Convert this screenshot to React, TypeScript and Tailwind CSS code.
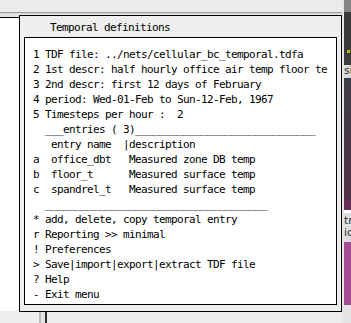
import React from "react";

const lines = [
  "1 TDF file: ../nets/cellular_bc_temporal.tdfa",
  "2 1st descr: half hourly office air temp floor te",
  "3 2nd descr: first 12 days of February",
  "4 period: Wed-01-Feb to Sun-12-Feb, 1967",
  "5 Timesteps per hour :  2",
  "  ___entries ( 3)______________________________",
  "   entry name  |description",
  "a  office_dbt   Measured zone DB temp",
  "b  floor_t      Measured surface temp",
  "c  spandrel_t   Measured surface temp",
  "  _____________________________________",
  "* add, delete, copy temporal entry",
  "r Reporting >> minimal",
  "! Preferences",
  "> Save|import|export|extract TDF file",
  "? Help",
  "- Exit menu",
];

const mono = {
  fontFamily: '"DejaVu Sans Mono", "Liberation Mono", monospace',
};

export default function App() {
  return (
    <div className="relative flex h-[323px] w-[351px] overflow-hidden bg-[#eeeeee]">
      {/* background window */}
      <div className="flex w-[342px] flex-col">
        <div className="h-[12px] bg-[#ebebeb]" />
        <div className="h-[1px] bg-[#9c9c9c]" />
        <div className="h-[1px] bg-[#d6d6d6]" />
        <div className="h-[3px] bg-[#e2e2e2]" />
        <div className="h-[1px] bg-black" />
        <div className="flex h-[293px]">
          <div className="w-[19px] bg-white" />
          <div className="flex-1 bg-[#eeeeee]" />
        </div>
        <div className="flex flex-1">
          <div className="w-[39px]" />
          <div className="w-[2px] bg-[#bdbdbd]" />
          <div className="w-[4px] bg-[#e4e4e4]" />
          <div className="w-[2px] bg-[#2a2a2a]" />
          <div className="flex-1" />
        </div>
      </div>
      <div className="w-[2px] bg-[#e6e6e6]" />
      {/* right strip: another window behind */}
      <div
        className="flex flex-1 flex-col overflow-hidden text-[11px] leading-[12px]"
        style={{ fontFamily: '"DejaVu Sans", sans-serif' }}
      >
        <div className="h-[12px] bg-[#858585]" />
        <div className="h-[38px] bg-[#3a3a3a]" />
        <div className="h-[4px] bg-[#3a3a3a] pl-[3px]">
          <div className="h-[3px] w-[3px] bg-[#c9b230]" />
        </div>
        <div className="h-[11px] bg-[#3c3c3c]" />
        <div className="h-[13px] bg-[#d9d9d9] whitespace-nowrap text-[#333]">sl</div>
        <div className="h-[122px] bg-gradient-to-b from-[#3e3c4a] to-[#4e3046]" />
        <div className="h-[10px] bg-[#6a2d5c]" />
        <div className="h-[3px] bg-white" />
        <div className="flex h-[29px] flex-col bg-[#dedede] whitespace-nowrap text-[#333]">
          <div className="h-[14px] pt-[2px]">tr</div>
          <div className="h-[14px]">ic</div>
        </div>
        <div className="h-[63px] bg-[#a64c93]" />
        <div className="flex-1 bg-[#e4e4e4]" />
      </div>

      {/* dialog */}
      <div className="absolute left-[19px] top-[15px] flex h-[297px] w-[323px] flex-col border border-black bg-[#eeeeee] px-[4px] pb-[6px]">
        <div
          className="flex h-[21px] shrink-0 items-center whitespace-pre pl-[26px] pt-[3px] text-[11px] tracking-[-0.62px] text-black"
          style={mono}
        >
          Temporal definitions
        </div>
        <div
          className="flex flex-1 flex-col overflow-hidden border border-black bg-white pl-[8px] pt-[9px] text-[11px] leading-[15px] tracking-[-0.62px] text-black"
          style={mono}
        >
          {lines.map((l, i) => (
            <div key={i} className="h-[15px] shrink-0 whitespace-pre">
              {l}
            </div>
          ))}
        </div>
      </div>
    </div>
  );
}
